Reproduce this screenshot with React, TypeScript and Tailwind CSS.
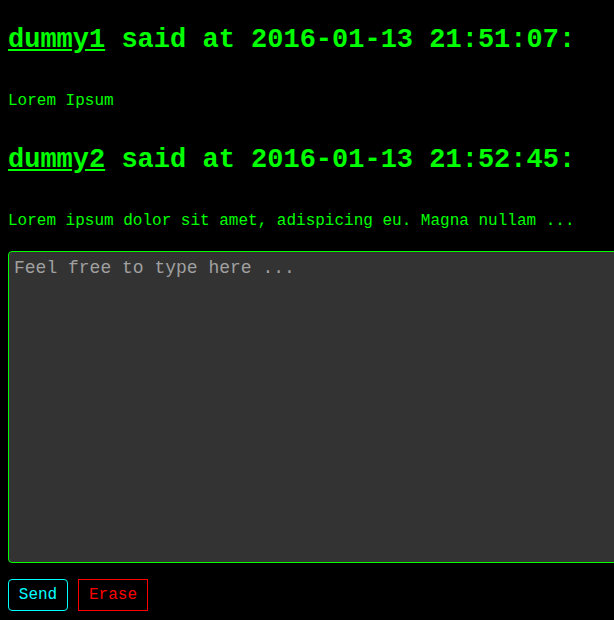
import React, { useState } from 'react';

const messages = [
  { user: 'dummy1', time: '2016-01-13 21:51:07', text: 'Lorem Ipsum' },
  { user: 'dummy2', time: '2016-01-13 21:52:45', text: 'Lorem ipsum dolor sit amet, adispicing eu. Magna nullam ...' },
];

export default function App() {
  const [draft, setDraft] = useState('');

  return (
    <div className="min-h-screen bg-black px-2 pb-2 font-['Courier_New','Liberation_Mono',monospace] text-[#00ff00] overflow-hidden">
      {messages.map((m, i) => (
        <div key={m.user} className={i === 0 ? 'pt-[25px]' : 'pt-[35px]'}>
          <h2 className="text-[27px] leading-[30px] font-bold whitespace-nowrap">
            <a href="#" className="underline">{m.user}</a> said at {m.time}:
          </h2>
          <p className="mt-[37px] text-[16px] leading-[18px] whitespace-nowrap">{m.text}</p>
        </div>
      ))}

      <textarea
        value={draft}
        onChange={e => setDraft(e.target.value)}
        placeholder="Feel free to type here ..."
        className="mt-[21px] block w-[640px] h-[312px] resize-none rounded-[4px] border border-[#00ff00] bg-[#333333] px-[5px] pt-[6px] text-[18px] leading-[21px] text-white placeholder:text-[#a0a0a0] outline-none font-['Courier_New','Liberation_Mono',monospace]"
      />

      <div className="mt-[16px] flex gap-[10px]">
        <button className="h-[32px] w-[60px] rounded-[4px] border border-[#00ffff] bg-black text-[16px] text-[#00ffff] font-['Courier_New','Liberation_Mono',monospace]">
          Send
        </button>
        <button
          onClick={() => setDraft('')}
          className="h-[32px] w-[70px] border border-[#ff0000] bg-black text-[16px] text-[#ff0000] font-['Courier_New','Liberation_Mono',monospace]"
        >
          Erase
        </button>
      </div>
    </div>
  );
}
